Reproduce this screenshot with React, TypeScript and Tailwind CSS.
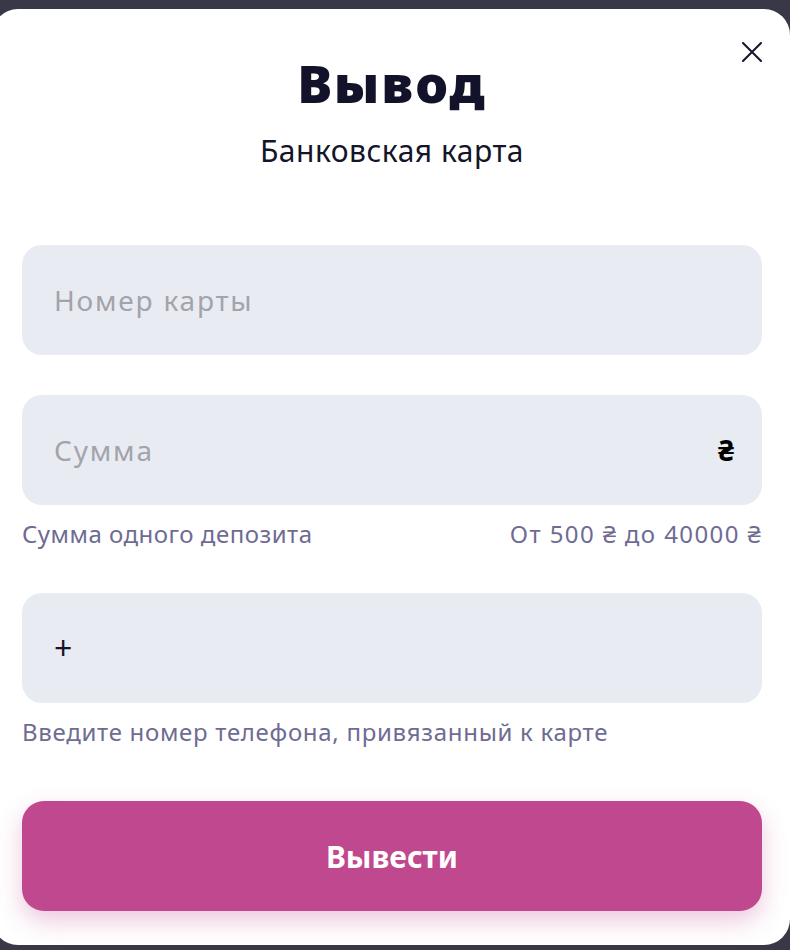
export default function App() {
    return (
        <div className="h-[950px] w-[790px] overflow-hidden bg-[#383846] pt-[9px]" style={{ fontFamily: '"Noto Sans", "Open Sans", sans-serif' }}>
            <div className="relative ml-[-8px] h-[936px] w-[798px] rounded-[26px] bg-white pl-[30px] pr-[28px]">
                <button className="absolute right-[28px] top-[33px] text-[#15152a]">
                    <svg width="20" height="20" viewBox="0 0 20 20" fill="none" stroke="currentColor" strokeWidth="2" strokeLinecap="round">
                        <path d="M1 1L19 19M19 1L1 19" />
                    </svg>
                </button>

                <h1 className="pt-[42px] text-center text-[52px] font-black leading-[64px] tracking-[2px] text-[#12122a]">Вывод</h1>
                <p className="mt-[17px] text-center text-[30px] leading-[38px] tracking-[0.5px] text-[#15152a]">Банковская карта</p>

                <div className="mt-[75px] flex flex-col">
                    <div className="flex h-[110px] items-center rounded-[20px] bg-[#e9ebf3] px-[32px]">
                        <span className="text-[28px] tracking-[1.8px] text-[#a3a3ab]">Номер карты</span>
                    </div>

                    <div className="mt-[40px] flex h-[110px] items-center justify-between rounded-[20px] bg-[#e9ebf3] pl-[32px] pr-[28px]">
                        <span className="text-[28px] tracking-[1.8px] text-[#a3a3ab]">Сумма</span>
                        <span className="text-[28px] font-bold text-black">₴</span>
                    </div>
                    <div className="mt-[14px] flex items-center justify-between text-[24px] leading-[30px] tracking-[0.5px] text-[#6e6c93]">
                        <span>Сумма одного депозита</span>
                        <span className="tracking-[1.4px]">От 500 ₴ до 40000 ₴</span>
                    </div>

                    <div className="mt-[44px] flex h-[110px] items-center rounded-[20px] bg-[#e9ebf3] px-[32px]">
                        <span className="text-[32px] leading-none text-[#15152a]">+</span>
                    </div>
                    <p className="mt-[14px] text-[24px] leading-[30px] tracking-[0.7px] text-[#6e6c93]">Введите номер телефона, привязанный к карте</p>

                    <button className="mt-[54px] flex h-[110px] items-center justify-center rounded-[22px] bg-[#c0488e] text-[30px] font-bold text-white shadow-[0_10px_24px_rgba(192,72,142,0.3)]">
                        Вывести
                    </button>
                </div>
            </div>
        </div>
    );
}
